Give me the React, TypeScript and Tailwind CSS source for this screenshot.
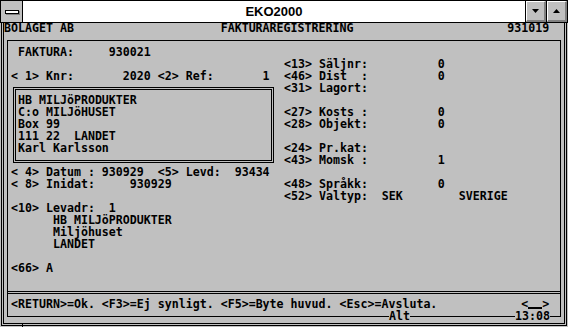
import React from "react";

const COLS = 80;
function row(...segs: [number, string][]): string {
  const arr: string[] = Array(COLS).fill(" ");
  for (const [c, t] of segs) {
    for (let i = 0; i < t.length; i++) arr[c + i] = t[i];
  }
  return arr.join("").replace(/\s+$/, "");
}

const Line = ({ text, pad = true }: { text?: string; pad?: boolean }) => (
  <div className={`h-[12px] whitespace-pre ${pad ? "pl-[3px]" : ""}`}>{text ?? ""}</div>
);

function TitleBar() {
  return (
    <div className="h-[23px] border border-black flex">
      <div className="w-[22px] border-r border-black bg-[#c0c0c0] flex items-center justify-center">
        <div className="w-[14px] h-[4px] border border-black bg-white shadow-[1px_1px_0_#808080]" />
      </div>
      <div className="flex-1 bg-white flex items-center justify-center font-['Liberation_Sans',Arial,sans-serif] font-bold text-[13px] leading-none text-black">
        EKO2000
      </div>
      <div className="w-[21px] border-l border-black">
        <div className="h-full border-t border-l border-white border-b-2 border-r-2 border-b-[#808080] border-r-[#808080] bg-[#c0c0c0] flex items-center justify-center">
          <svg width="7" height="4" viewBox="0 0 7 4">
            <path d="M0 0H7L3.5 4Z" fill="#000" />
          </svg>
        </div>
      </div>
      <div className="w-[21px] border-l border-black">
        <div className="h-full border-t border-l border-white border-b-2 border-r-2 border-b-[#808080] border-r-[#808080] bg-[#c0c0c0] flex items-center justify-center">
          <svg width="7" height="4" viewBox="0 0 7 4">
            <path d="M0 4H7L3.5 0Z" fill="#000" />
          </svg>
        </div>
      </div>
    </div>
  );
}

export default function App() {
  const left = (s: string) => s.slice(1);
  const rightRows: string[] = [
    row([40, "<13> Säljnr:"], [62, "0"]),
    row([40, "<46> Dist  :"], [62, "0"]),
    row([40, "<31> Lagort:"]),
    "",
    row([40, "<27> Kosts :"], [62, "0"]),
    row([40, "<28> Objekt:"], [62, "0"]),
    "",
    row([40, "<24> Pr.kat:"]),
    row([40, "<43> Momsk :"], [62, "1"]),
    "",
    row([40, "<48> Språkk:"], [62, "0"]),
    row([40, "<52> Valtyp:"], [54, "SEK"], [65, "SVERIGE"]),
  ].map((s) => s.slice(40));

  const status = left(row([1, "<RETURN>=Ok. <F3>=Ej synligt. <F5>=Byte huvud. <Esc>=Avsluta."], [74, "<"]));

  return (
    <div className="w-[568px] h-[327px] bg-[#c0c0c0] overflow-hidden relative">
      <TitleBar />
      <div className="mx-[1px] h-[303px] border-x border-b border-black px-px">
        <div className="h-[301px] border-x border-b border-black">
          <div className="h-[300px] font-['DejaVu_Sans_Mono',monospace] font-bold text-[11.627px] leading-[12px] text-black">
            {/* row 0 */}
            <div className="h-[11px] leading-[10px] whitespace-pre">
              {row([0, "BOLAGET AB"], [31, "FAKTURAREGISTRERING"], [72, "931019"])}
            </div>
            {/* main box */}
            <div className="ml-[3px] w-[554px] mt-[6px] border-l border-r border-t border-black pt-[5px] h-[277px]">
              <Line text={left(row([2, "FAKTURA:"], [15, "930021"]))} />
              <div className="flex">
                <div className="w-[276px]">
                  <Line />
                  <Line text={left(row([1, "< 1> Knr:"], [17, "2020"], [22, "<2>"], [26, "Ref:"], [37, "1"]))} />
                  <div className="ml-[5px] mt-[5px] mb-[3px] w-[261px] h-[76px] border-[3px] border-double border-black pt-[4px] pl-[2px]">
                    <div className="h-[12px] whitespace-pre">HB MILJöPRODUKTER</div>
                    <div className="h-[12px] whitespace-pre">C:o MILJöHUSET</div>
                    <div className="h-[12px] whitespace-pre">Box 99</div>
                    <div className="h-[12px] whitespace-pre">111 22  LANDET</div>
                    <div className="h-[12px] whitespace-pre">Karl Karlsson</div>
                  </div>
                  <Line text={left(row([1, "< 4> Datum : 930929"], [22, "<5> Levd:"], [33, "93434"]))} />
                  <Line text={left(row([1, "< 8> Inidat:"], [18, "930929"]))} />
                  <Line />
                </div>
                <div className="flex-1">
                  {rightRows.map((r, i) => (
                    <Line key={i} text={r} pad={false} />
                  ))}
                </div>
              </div>
              <Line text={left(row([1, "<10> Levadr:"], [15, "1"]))} />
              <Line text={left(row([7, "HB MILJöPRODUKTER"]))} />
              <Line text={left(row([7, "Miljöhuset"]))} />
              <Line text={left(row([7, "LANDET"]))} />
              <Line />
              <Line text={left(row([1, "<66> A"]))} />
              <Line />
              <div className="h-[12px] pt-[5px]">
                <div className="h-[3px] border-t-[3px] border-double border-black" />
              </div>
              <div className="h-[12px] whitespace-pre pl-[3px] flex">
                <span>{status}</span>
                <span className="inline-block w-[14px] h-[11px] border-b-2 border-black" />
                <span>&gt;</span>
              </div>
            </div>
            {/* bottom line of the box */}
            <div className="ml-[3px] w-[554px] -mt-[7px] h-[12px] flex items-start">
              <div className="w-[382px] h-px mt-[6px] bg-black" />
              <div className="w-[21px] whitespace-pre">Alt</div>
              <div className="w-[105px] h-px mt-[6px] bg-black" />
              <div className="w-[35px] whitespace-pre">13:08</div>
              <div className="flex-1 h-px mt-[6px] bg-black" />
            </div>
          </div>
        </div>
      </div>
      <div className="absolute left-[22px] top-[323px] w-px h-[4px] bg-black" />
    </div>
  );
}
